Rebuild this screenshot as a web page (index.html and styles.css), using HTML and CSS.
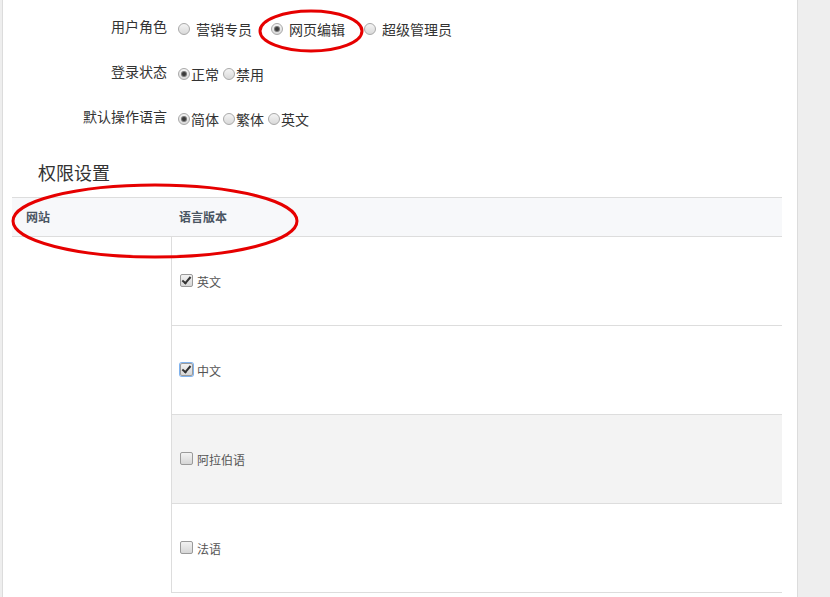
FILE: index.html
```html
<!DOCTYPE html>
<html lang="zh-CN">
<head>
<meta charset="utf-8">
<title>用户设置</title>
<link rel="stylesheet" href="styles.css">
</head>
<body>
<div class="page">
  <div class="form">
    <div class="form-row">
      <div class="label">用户角色</div>
      <div class="options spaced">
        <span class="opt"><span class="radio"></span>营销专员</span>
        <span class="opt"><span class="radio on"></span>网页编辑</span>
        <span class="opt"><span class="radio"></span>超级管理员</span>
      </div>
    </div>
    <div class="form-row">
      <div class="label">登录状态</div>
      <div class="options">
        <span class="opt"><span class="radio on"></span>正常</span>
        <span class="opt"><span class="radio"></span>禁用</span>
      </div>
    </div>
    <div class="form-row">
      <div class="label">默认操作语言</div>
      <div class="options">
        <span class="opt"><span class="radio on"></span>简体</span>
        <span class="opt"><span class="radio"></span>繁体</span>
        <span class="opt"><span class="radio"></span>英文</span>
      </div>
    </div>
  </div>

  <h2 class="section-title">权限设置</h2>

  <div class="perm-table">
    <div class="thead">
      <div class="th th-site">网站</div>
      <div class="th th-lang">语言版本</div>
    </div>
    <div class="tbody">
      <div class="td-site"></div>
      <div class="lang-col">
        <div class="lang-row"><span class="check on"></span>英文</div>
        <div class="lang-row"><span class="check on focus"></span>中文</div>
        <div class="lang-row hover"><span class="check"></span>阿拉伯语</div>
        <div class="lang-row"><span class="check"></span>法语</div>
      </div>
    </div>
  </div>

  <svg class="mark mark-role" width="110" height="48" viewBox="0 0 110 48">
    <ellipse cx="55" cy="25" rx="51" ry="20" fill="none" stroke="#e60000" stroke-width="3"/>
  </svg>
  <svg class="mark mark-head" width="292" height="80" viewBox="0 0 292 80">
    <ellipse cx="147" cy="40" rx="142" ry="36" fill="none" stroke="#e60000" stroke-width="3"/>
  </svg>
</div>
</body>
</html>
```

FILE: styles.css
```css
html, body {
  margin: 0;
  padding: 0;
}
body {
  background: #eeeeee;
  font-family: "Noto Sans CJK SC", "Noto Sans", sans-serif;
  color: #333;
  height: 597px;
  overflow: hidden;
}
.page {
  position: relative;
  margin-left: 2px;
  width: 794px;
  height: 597px;
  overflow: hidden;
  background: #fff;
  border-left: 1px solid #dcdcdc;
  border-right: 1px solid #dcdcdc;
}
.form {
  padding-top: 6px;
}
.form-row {
  display: flex;
  align-items: center;
  height: 45px;
}
.label {
  width: 164px;
  text-align: right;
  font-size: 14px;
  line-height: 20px;
  margin-top: -5px;
  color: #333;
}
.options {
  display: flex;
  align-items: center;
  padding-left: 11px;
  font-size: 14px;
  line-height: 20px;
}
.opt {
  display: inline-flex;
  align-items: center;
}
.radio {
  box-sizing: border-box;
  width: 12px;
  height: 12px;
  border-radius: 50%;
  border: 1px solid #a9a9a9;
  background: linear-gradient(#f4f4f4, #d9d9d9);
  display: inline-flex;
  align-items: center;
  justify-content: center;
  margin-right: 1px;
}
.opt + .opt .radio {
  margin-left: 4px;
}
.radio.on::after {
  content: "";
  width: 4px;
  height: 4px;
  border-radius: 50%;
  background: #3a3a3a;
  box-shadow: 0 0 0 1px #777;
}
.options.spaced .radio {
  margin: 0 6px 0 0;
}
.options.spaced .opt {
  margin-right: 19px;
}
.section-title {
  margin: 0;
  padding: 19px 0 0 35px;
  height: 56px;
  box-sizing: border-box;
  font-size: 18px;
  line-height: 24px;
  font-weight: normal;
  color: #333;
}
.perm-table {
  margin-left: 9px;
  width: 770px;
}
.thead {
  display: flex;
  height: 38px;
  align-items: center;
  background: #f7f8fa;
  border-top: 1px solid #dddddd;
  border-bottom: 1px solid #dddddd;
  font-size: 12px;
  font-weight: bold;
  color: #4a5562;
}
.th {
  margin-top: -2px;
}
.th-site {
  width: 146px;
  padding-left: 14px;
}
.th-lang {
  padding-left: 7px;
}
.tbody {
  display: flex;
}
.td-site {
  width: 159px;
  border-right: 1px solid #dddddd;
}
.lang-col {
  flex: 1;
}
.lang-row {
  height: 88px;
  border-bottom: 1px solid #dddddd;
  display: flex;
  align-items: center;
  padding-left: 8px;
  font-size: 12px;
  color: #555;
}
.lang-row.hover {
  background: #f3f3f3;
}
.check {
  box-sizing: border-box;
  width: 13px;
  height: 13px;
  border: 1px solid #9a9a9a;
  border-radius: 2px;
  background: linear-gradient(#f2f2f2, #d6d6d6);
  margin-right: 4px;
  margin-top: -2px;
  position: relative;
}
.check.on::after {
  content: "";
  position: absolute;
  left: 3px;
  top: 0px;
  width: 3px;
  height: 7px;
  border-right: 2px solid #333;
  border-bottom: 2px solid #333;
  transform: rotate(40deg);
}
.check.focus {
  box-shadow: 0 0 0 1px #7eb2ee;
}
.mark {
  position: absolute;
  pointer-events: none;
}
.mark-role {
  left: 253px;
  top: 6px;
}
.mark-head {
  left: 5px;
  top: 181px;
}
```
